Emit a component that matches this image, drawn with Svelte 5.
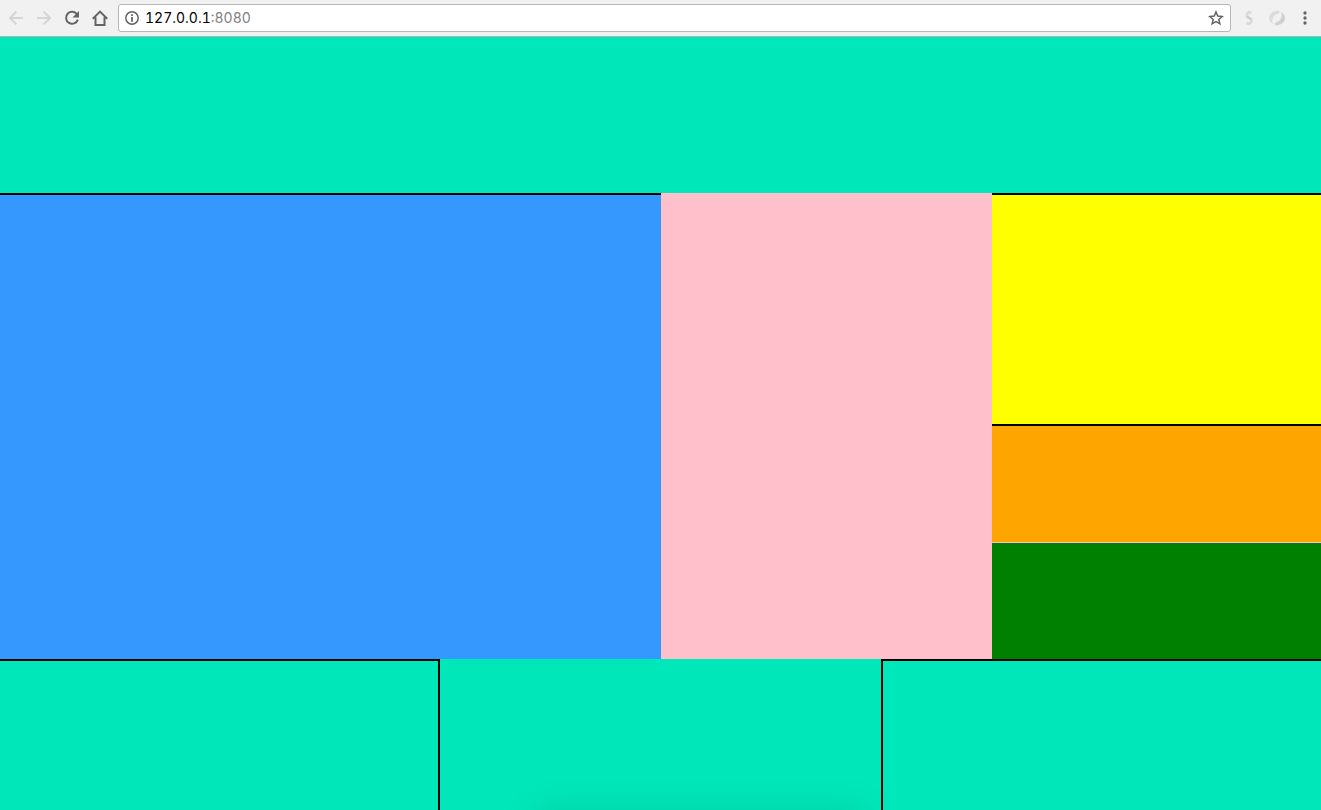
<script>
  const cells = ['left', 'middle', 'right'];
</script>

<div class="window">
  <header class="toolbar">
    <nav class="buttons">
      <svg class="off" width="16" height="16" viewBox="0 0 16 16"><path d="M15 8H2M8.3 1.7 2 8l6.3 6.3" /></svg>
      <svg class="off" width="16" height="16" viewBox="0 0 16 16"><path d="M1 8h13M7.7 1.7 14 8l-6.3 6.3" /></svg>
      <svg width="16" height="16" viewBox="0 0 16 16"><path d="M13.2 4.7A6 6 0 1 0 13.8 9.6" /><path class="solid" d="M15 1v6.5H8.5z" /></svg>
      <svg width="16" height="16" viewBox="0 0 16 16"><path d="M.8 8.8 8 1.6l7.2 7.2M3.5 7.2V15h9V7.2" /></svg>
    </nav>
    <div class="address">
      <svg class="info" width="14" height="14" viewBox="0 0 14 14"><circle cx="7" cy="7" r="6.2" /><path d="M7 6v4.8M7 3.2v1.8" stroke-width="1.8" /></svg>
      <span class="url"><b>127.0.0.1</b>:8080</span>
      <svg class="star" width="16" height="16" viewBox="0 0 16 16"><path d="m8 2 1.75 4.1 4.45.4-3.4 2.95 1.05 4.35L8 11.5l-3.85 2.3 1.05-4.35L1.8 6.5l4.45-.4z" /></svg>
    </div>
    <div class="extensions">
      <svg width="18" height="18" viewBox="0 0 18 18"><path d="M11.5 4 9 3 7 5v2.4l2 1.4 2.3 1.6v2.4L9 14.9l-2.6-1" stroke="#dadada" stroke-width="2.8" /><path d="m7 7.8 4 2.3" stroke="#c8c8c8" stroke-width="1.4" /></svg>
      <svg width="18" height="18" viewBox="0 0 18 18"><path class="swirl" d="M9 1.8C4.3 2 1 5.2 1 9c0 2.8 1.8 5 4.2 5.8C3.9 12.9 4 10.4 5.2 8.2 6.3 6.2 7.8 5.4 9.2 5.2L12 3 8 .8z" /><path class="swirl dark" d="M9 16.2c4.7-.2 8-3.4 8-7.2 0-2.8-1.8-5-4.2-5.8 1.3 1.9 1.2 4.4 0 6.6-1.1 2-2.6 2.8-4 3L6 15l4 2.2z" /></svg>
      <svg width="6" height="16" viewBox="0 0 6 16"><g class="solid"><circle cx="3" cy="3" r="1.65" /><circle cx="3" cy="8" r="1.65" /><circle cx="3" cy="13" r="1.65" /></g></svg>
    </div>
  </header>

  <main>
    <section class="banner"></section>
    <section class="content">
      <div class="blue"></div>
      <div class="pink"></div>
      <aside>
        <div class="yellow"></div>
        <div class="orange"></div>
        <div class="green"></div>
      </aside>
    </section>
    <footer>
      {#each cells as cell}
        <div class={cell}></div>
      {/each}
      <i class="shadow"></i>
    </footer>
  </main>
</div>

<style>
  :global(body) { margin: 0; overflow: hidden; }
  .window { display: flex; flex-direction: column; height: 810px; overflow: hidden; }
  .window * { box-sizing: border-box; }
  .toolbar { display: flex; flex: none; height: 37px; padding: 4px 13px 0 8px; background: #f1f1f1; border-bottom: 1px solid #b1b1b1; }
  .buttons { display: flex; gap: 12px; width: 110px; height: 28px; align-items: center; }
  svg { display: block; flex: none; fill: none; stroke: #646464; stroke-width: 2; }
  .off { stroke: #d4d4d4; }
  .solid { fill: #646464; stroke: none; }
  .address { display: flex; width: 1113px; height: 28px; align-items: center; padding: 0 6px; background: #fff; border: 1px solid #b6b6b6; border-radius: 3px; }
  .info { stroke-width: 1.5; }
  .url { flex: 1; padding-left: 6px; font: 14px/26px Inter, sans-serif; font-variant-numeric: tabular-nums; color: #808080; }
  .url b { font-weight: 400; color: #000; }
  .star { stroke-width: 1.5; }
  .extensions { display: flex; flex: 1; gap: 10px; height: 28px; align-items: center; padding-left: 9px; }
  .extensions svg:last-child { margin-left: auto; }
  .swirl { fill: #dcdcdc; stroke: none; }
  .dark { fill: #d0d0d0; }
  main { display: flex; flex: 1; flex-direction: column; background: #00e7b9; }
  .banner { height: 156px; }
  .content { display: grid; grid-template-columns: 661px 331px 1fr; height: 466px; background: #ffc0cb; }
  .blue { background: #3498ff; border-top: 2px solid #000; }
  aside { display: grid; grid-template-rows: 231px 118px 1px 116px; }
  .yellow { background: #ff0; border-top: 2px solid #000; }
  .orange { background: #ffa500; border-top: 2px solid #000; }
  .green { grid-row: 4; background: #008000; }
  footer { position: relative; display: grid; grid-template-columns: 440px 1fr 440px; flex: 1; overflow: hidden; }
  .left { border-top: 2px solid #000; border-right: 2px solid #000; }
  .right { border-top: 2px solid #000; border-left: 2px solid #000; }
  .shadow { position: absolute; left: 538px; top: 157px; width: 326px; height: 60px; border-radius: 5px; box-shadow: 0 0 40px rgba(0, 0, 0, .15); }
</style>
